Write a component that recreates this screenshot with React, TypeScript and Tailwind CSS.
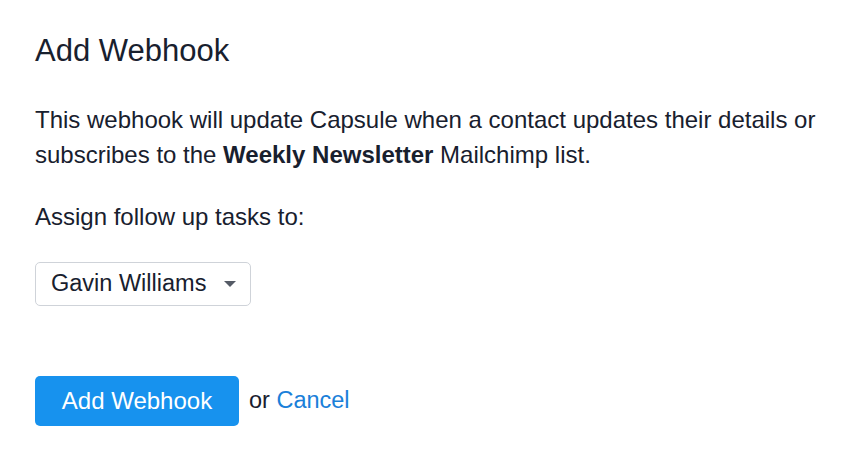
export default function App() {
  return (
    <main className="min-h-screen bg-white text-[#18202e] font-['Liberation_Sans',Arial,sans-serif]">
      <section className="px-[35px] pt-[32px]">
        <h1 className="text-[31px] leading-[38px]">Add Webhook</h1>

        <p className="mt-[32px] max-w-[800px] text-[24px] leading-[35px]">
          This webhook will update Capsule when a contact updates their details or
          subscribes to the <strong className="font-bold">Weekly Newsletter</strong> Mailchimp list.
        </p>

        <p className="mt-[27px] text-[24px] leading-[35px]">Assign follow up tasks to:</p>

        <div className="mt-[28px] flex h-[44px] w-[216px] items-center justify-between rounded-[5px] border border-[#cfd3d9] pl-[15px] pr-[14px]">
          <span className="text-[23.5px]">Gavin Williams</span>
          <svg width="12" height="6" viewBox="0 0 12 6">
            <path d="M0 0h12L6 6z" fill="#555b66" />
          </svg>
        </div>

        <div className="mt-[70px] flex items-center gap-[10px]">
          <button className="h-[50px] w-[204px] rounded-[5px] bg-[#1792ee] text-[24px] text-white">
            Add Webhook
          </button>
          <span className="text-[23.5px]">
            or <a className="text-[#1a80d9]">Cancel</a>
          </span>
        </div>
      </section>
    </main>
  );
}
